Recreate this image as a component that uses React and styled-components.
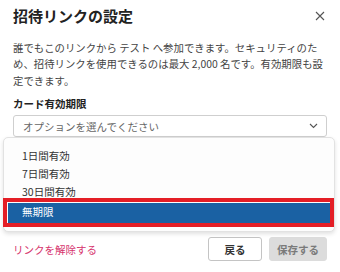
import React from "react";
import styled, { createGlobalStyle } from "styled-components";

const Global = createGlobalStyle`
  html, body { margin: 0; padding: 0; background: #fff; }
  body { font-family: "Noto Sans CJK JP", "Noto Sans", sans-serif; color: #333; }
  * { box-sizing: border-box; }
`;

const Dialog = styled.div`
  width: 340px;
  height: 272px;
  padding: 6px 13px 0 13px;
  position: relative;
  overflow: hidden;
`;

const Header = styled.div`
  display: flex;
  align-items: center;
  justify-content: space-between;
  height: 20px;
`;

const Title = styled.h1`
  margin: 0;
  font-size: 15px;
  line-height: 20px;
  font-weight: 700;
  color: #222;
`;

const CloseButton = styled.button`
  border: 0;
  background: none;
  padding: 0;
  width: 12px;
  height: 12px;
  margin-right: 1px;
  display: flex;
  align-items: center;
  justify-content: center;
  color: #555;
`;

const Description = styled.p`
  margin: 13.5px 0 0 0;
  font-size: 10.4px;
  line-height: 16.5px;
  color: #444;
`;

const Label = styled.div`
  margin-top: 8px;
  font-size: 10.5px;
  line-height: 14px;
  font-weight: 700;
  color: #222;
`;

const SelectWrap = styled.div`
  position: relative;
  margin-top: 4px;
`;

const SelectBox = styled.div`
  height: 22px;
  border: 1px solid #cfcfcf;
  border-radius: 3px;
  display: flex;
  align-items: center;
  justify-content: space-between;
  padding: 0 8px 0 9px;
  font-size: 10.5px;
  color: #666;
`;

const Listbox = styled.ul`
  position: absolute;
  top: 100%;
  left: -10px;
  right: -8px;
  margin: 0;
  padding: 9px 4px 7px 4px;
  list-style: none;
  background: #fdfdfd;
  border: 1px solid #e2e2e2;
  border-radius: 5px;
  box-shadow: 0 2px 4px rgba(0, 0, 0, 0.12);
`;

const Option = styled.li`
  height: ${(p) => (p.$active ? "21px" : "18px")};
  margin-top: ${(p) => (p.$active ? "2px" : "0")};
  line-height: 17px;
  padding-left: 14px;
  font-size: 10.5px;
  color: ${(p) => (p.$active ? "#fff" : "#333")};
  background: ${(p) => (p.$active ? "#1a61a3" : "transparent")};
  border-bottom: ${(p) => (p.$active ? "1px solid #9aa9d6" : "0")};
`;

const Highlight = styled.div`
  position: absolute;
  left: 3px;
  top: 198px;
  width: 331px;
  height: 29px;
  border: 4px solid #e41e26;
  pointer-events: none;
`;

const Footer = styled.div`
  margin-top: 100px;
  display: flex;
  align-items: center;
  justify-content: space-between;
`;

const DangerLink = styled.a`
  font-size: 10.5px;
  color: #d6336c;
  text-decoration: none;
`;

const Buttons = styled.div`
  display: flex;
  gap: 7px;
`;

const Button = styled.button`
  height: 24px;
  width: ${(p) => p.$w}px;
  border-radius: 3px;
  font-family: inherit;
  font-size: 10.5px;
  font-weight: 700;
  padding: 0;
  border: 1px solid ${(p) => (p.$primary ? "#dcdcdc" : "#c4c4c4")};
  background: ${(p) => (p.$primary ? "#dcdcdc" : "#fff")};
  color: ${(p) => (p.$primary ? "#7a7a7a" : "#333")};
`;

export default function App() {
  return (
    <>
      <Global />
      <Dialog>
        <Header>
          <Title>招待リンクの設定</Title>
          <CloseButton aria-label="閉じる">
            <svg width="10" height="10" viewBox="0 0 10 10">
              <path d="M1 1L9 9M9 1L1 9" stroke="#555" strokeWidth="1.1" fill="none" />
            </svg>
          </CloseButton>
        </Header>
        <Description>
          誰でもこのリンクから テスト へ参加できます。セキュリティのため、招待リンクを使用できるのは最大 2,000 名です。有効期限も設定できます。
        </Description>
        <Label>カード有効期限</Label>
        <SelectWrap>
          <SelectBox>
            <span>オプションを選んでください</span>
            <svg width="9" height="6" viewBox="0 0 9 6">
              <path d="M1 1L4.5 4.5L8 1" stroke="#555" strokeWidth="1.1" fill="none" />
            </svg>
          </SelectBox>
          <Listbox>
            <Option>1日間有効</Option>
            <Option>7日間有効</Option>
            <Option>30日間有効</Option>
            <Option $active>無期限</Option>
          </Listbox>
        </SelectWrap>
        <Footer>
          <DangerLink href="#">リンクを解除する</DangerLink>
          <Buttons>
            <Button $w={54}>戻る</Button>
            <Button $w={58} $primary>保存する</Button>
          </Buttons>
        </Footer>
        <Highlight />
      </Dialog>
    </>
  );
}
